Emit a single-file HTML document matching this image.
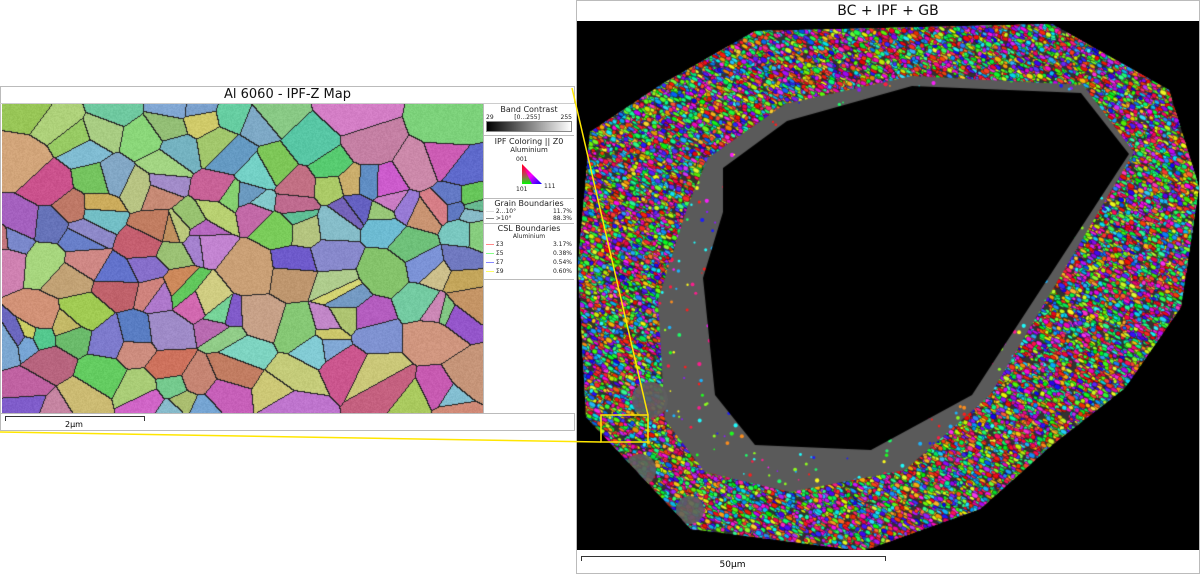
<!DOCTYPE html>
<html><head><meta charset="utf-8"><style>
body{margin:0;width:1200px;height:574px;background:#fff;position:relative;overflow:hidden;font-family:"DejaVu Sans","Liberation Sans",sans-serif;}
.abs{position:absolute}
.lp{left:0;top:86px;width:575px;height:345px;border:1px solid #bbb;box-sizing:border-box}
.ttl{font-size:13px;text-align:center;color:#111}
.lg{font-size:7px;color:#222}
</style></head><body>
<div class="abs lp"></div>
<div class="abs ttl" style="left:0;top:87px;width:575px;height:16px;line-height:16px;border-bottom:1px solid #ccc">Al 6060 - IPF-Z Map</div>
<canvas id="c1" class="abs" width="481" height="309" style="left:2px;top:104px"></canvas>
<div class="abs" style="left:483px;top:104px;width:91px;height:309px;border-left:1px solid #bbb;background:#fff"></div>
<div class="abs lg" style="left:484px;top:105px;width:90px">
 <div style="text-align:center;font-size:8px">Band Contrast</div>
 <div style="display:flex;justify-content:space-between;font-size:6px;padding:0 2px"><span>29</span><span>[0...255]</span><span>255</span></div>
 <div style="margin:0 2px;height:9px;border:1px solid #888;background:linear-gradient(90deg,#000,#fff)"></div>
 <div style="border-top:1px solid #bbb;margin-top:3px;text-align:center;font-size:8px;padding-top:1px">IPF Coloring || Z0</div>
 <div style="text-align:center;font-size:7px">Aluminium</div>
 <div style="position:relative;height:44px">
  <span style="position:absolute;left:32px;top:2px;font-size:6px">001</span>
  <svg style="position:absolute;left:38px;top:10px" width="22" height="22"><defs><linearGradient id="g1" x1="0" y1="0" x2="1" y2="1"><stop offset="0" stop-color="#f00"/><stop offset=".5" stop-color="#f0f"/><stop offset="1" stop-color="#00f"/></linearGradient><linearGradient id="g2" x1="0" y1="0" x2="0" y2="1"><stop offset="0" stop-color="rgba(255,0,0,0)"/><stop offset="1" stop-color="#0f0"/></linearGradient></defs><polygon points="0,0 0,20 20,20" fill="url(#g1)"/><polygon points="0,0 0,20 10,20" fill="url(#g2)"/></svg>
  <span style="position:absolute;left:32px;top:32px;font-size:6px">101</span>
  <span style="position:absolute;left:60px;top:29px;font-size:6px">111</span>
 </div>
 <div style="border-top:1px solid #bbb;text-align:center;font-size:8px">Grain Boundaries</div>
 <div style="display:flex;justify-content:space-between;font-size:6px;padding:0 2px"><span><span style="display:inline-block;width:8px;border-top:1px solid #ddd;vertical-align:middle"></span> 2...10°</span><span>11.7%</span></div>
 <div style="display:flex;justify-content:space-between;font-size:6px;padding:0 2px"><span><span style="display:inline-block;width:8px;border-top:1px solid #888;vertical-align:middle"></span> &gt;10°</span><span>88.3%</span></div>
 <div style="border-top:1px solid #bbb;text-align:center;font-size:8px;margin-top:1px">CSL Boundaries</div>
 <div style="text-align:center;font-size:6px">Aluminium</div>
 <div style="display:flex;justify-content:space-between;font-size:6px;padding:1px 2px"><span><span style="display:inline-block;width:8px;border-top:1px solid #f88;vertical-align:middle"></span> Σ3</span><span>3.17%</span></div>
 <div style="display:flex;justify-content:space-between;font-size:6px;padding:1px 2px"><span><span style="display:inline-block;width:8px;border-top:1px solid #8f8;vertical-align:middle"></span> Σ5</span><span>0.38%</span></div>
 <div style="display:flex;justify-content:space-between;font-size:6px;padding:1px 2px"><span><span style="display:inline-block;width:8px;border-top:1px solid #88f;vertical-align:middle"></span> Σ7</span><span>0.54%</span></div>
 <div style="display:flex;justify-content:space-between;font-size:6px;padding:1px 2px"><span><span style="display:inline-block;width:8px;border-top:1px solid #ff6;vertical-align:middle"></span> Σ9</span><span>0.60%</span></div>
 <div style="border-top:1px solid #bbb;margin-top:3px"></div>
</div>
<div class="abs" style="left:0;top:413px;width:575px;border-top:1px solid #bbb"></div>
<div class="abs" style="left:5px;top:416px;width:138px;height:4px;border:1px solid #333;border-bottom:none"></div>
<div class="abs" style="left:5px;top:420px;width:138px;text-align:center;font-size:8px">2μm</div>

<div class="abs" style="left:576px;top:0;width:624px;height:574px;border:1px solid #bbb;box-sizing:border-box"></div>
<div class="abs ttl" style="left:577px;top:1px;width:622px;height:20px;line-height:20px;font-size:14px">BC + IPF + GB</div>
<canvas id="c2" class="abs" width="622" height="529" style="left:577px;top:21px"></canvas>
<div class="abs" style="left:581px;top:556px;width:303px;height:4px;border:1px solid #333;border-bottom:none"></div>
<div class="abs" style="left:581px;top:560px;width:303px;text-align:center;font-size:9px">50μm</div>

<svg class="abs" style="left:0;top:0" width="1200" height="574">
<g stroke="#ffe600" stroke-width="1.5" fill="none">
<line x1="572" y1="88" x2="648" y2="415"/>
<line x1="0" y1="432" x2="601" y2="442"/>
<rect x="601" y="415" width="47" height="27"/>
</g></svg>
<script>
var s=12345;function r(){s=(s*16807)%2147483647;return s/2147483647;}
function hsl(h,sa,l){return 'hsl('+h+','+sa+'%,'+l+'%)';}
(function(){var c=document.getElementById('c1'),x=c.getContext('2d'),W=481,H=309;
var n=170,sx=[],sy=[],col=[];
for(var i=0;i<n;i++){sx.push(r()*W);sy.push(r()*H);var h=r()*360;col.push(hsl(h,38+r()*20,58+r()*12));}
var img=x.createImageData(W,H),idx=new Int16Array(W*H);
var tmp=document.createElement('canvas').getContext('2d');var rgb=col.map(function(cc){tmp.fillStyle=cc;tmp.fillRect(0,0,1,1);return tmp.getImageData(0,0,1,1).data;});
for(var yy=0;yy<H;yy++)for(var xx=0;xx<W;xx++){var b=0,bd=1e9;for(var i=0;i<n;i++){var dx=(xx-sx[i])*0.85,dy=yy-sy[i],d=dx*dx+dy*dy;if(d<bd){bd=d;b=i;}}idx[yy*W+xx]=b;}
for(var yy=0;yy<H;yy++)for(var xx=0;xx<W;xx++){var k=yy*W+xx,b=idx[k],p=k*4,e=(xx<W-1&&idx[k+1]!=b)||(yy<H-1&&idx[k+W]!=b);
if(e){img.data[p]=35;img.data[p+1]=35;img.data[p+2]=35;}else{var q=rgb[b],nz=(r()-0.5)*18-6;img.data[p]=q[0]+nz;img.data[p+1]=q[1]+nz;img.data[p+2]=q[2]+nz;}img.data[p+3]=255;}
x.putImageData(img,0,0);})();
(function(){var c=document.getElementById('c2'),x=c.getContext('2d');x.fillStyle='#000';x.fillRect(0,0,622,529);
var ox=577,oy=21;
var outer=[[755,31],[1052,24],[1169,90],[1199,187],[1181,307],[1125,388],[1052,445],[980,509],[863,551],[691,529],[586,417],[578,264],[590,132],[662,84]];
var hole=[[723,168],[787,121],[912,86],[1081,93],[1129,154],[972,395],[871,450],[755,445],[715,395],[703,278],[723,212]];
var gray=[[708,158],[785,104],[912,76],[1083,85],[1134,152],[990,395],[905,470],[790,492],[705,472],[665,420],[658,300],[688,205]];
function path(p){x.beginPath();p.forEach(function(q,i){var X=q[0]-ox,Y=q[1]-oy;i?x.lineTo(X,Y):x.moveTo(X,Y);});x.closePath();}
x.save();path(outer);x.clip();
x.fillStyle='#333';x.fillRect(0,0,622,529);
var hues=[0,120,240,300,180,60,30,270,200,330,90,140,350];
for(var i=0;i<45000;i++){var X=r()*622,Y=r()*529;var h=hues[Math.floor(r()*hues.length)]+r()*20;
x.fillStyle=hsl(h,95,45+r()*15);x.strokeStyle='#111';x.lineWidth=0.4;x.beginPath();x.ellipse(X,Y,1.8+r()*2.2,1.2+r()*1.3,0.5,0,6.3);x.fill();x.stroke();}
x.save();path(gray);x.fillStyle='#5a5a5a';x.fill();x.restore();
x.fillStyle='rgba(95,95,95,0.9)';
[[650,400,18],[640,470,16],[690,510,14]].forEach(function(b){x.beginPath();x.arc(b[0]-ox,b[1]-oy,b[2],0,6.3);x.fill();});
x.save();path(gray);x.clip();for(var i=0;i<1400;i++){var X=r()*622,Y=r()*529;x.fillStyle=hsl(hues[Math.floor(r()*hues.length)],95,55);x.beginPath();x.arc(X,Y,0.8+r()*1.4,0,6.3);x.fill();}x.restore();
path(hole);x.fillStyle='#000';x.fill();
x.restore();})();
</script>
</body></html>
